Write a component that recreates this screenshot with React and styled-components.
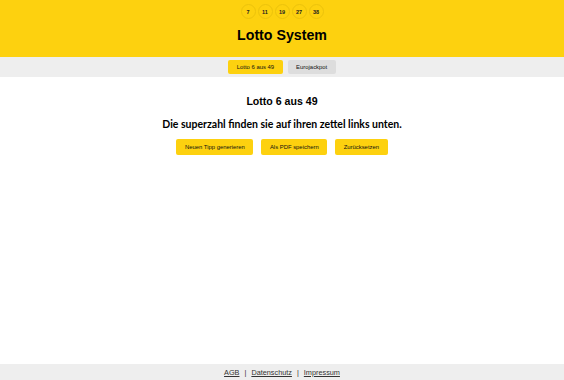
import React from "react";
import styled, { createGlobalStyle } from "styled-components";

const Global = createGlobalStyle`
  html, body { margin: 0; padding: 0; }
  body { font-family: "Liberation Sans", Arial, sans-serif; background: #fff; color: #000; }
`;

const Page = styled.div`
  min-height: 100vh;
  display: flex;
  flex-direction: column;
`;

const Header = styled.header`
  background: #fdd10f;
  height: 57px;
  display: flex;
  flex-direction: column;
  align-items: center;
  padding-top: 4px;
  box-sizing: border-box;
`;

const Balls = styled.div`
  display: flex;
  gap: 2px;
`;

const Ball = styled.div`
  width: 13px;
  height: 13px;
  border-radius: 50%;
  border: 0.5px solid #ecc30c;
  display: flex;
  align-items: center;
  justify-content: center;
  font-size: 5.5px;
  font-weight: bold;
  color: #222;
`;

const Title = styled.h1`
  margin: 9px 0 0;
  font-size: 14.2px;
  font-weight: bold;
  line-height: 1;
`;

const Nav = styled.nav`
  background: #eeeeee;
  height: 20px;
  display: flex;
  justify-content: center;
  align-items: center;
  gap: 5px;
`;

const Tab = styled.button`
  border: none;
  border-radius: 2px;
  height: 14px;
  padding: 0 8.5px;
  font-family: inherit;
  font-size: 5.9px;
  color: #111;
  background: ${(p) => (p.$active ? "#fdd10f" : "#dddddd")};
  cursor: pointer;
`;

const Main = styled.main`
  flex: 1;
  display: flex;
  flex-direction: column;
  align-items: center;
  padding-top: 18px;
`;

const Heading = styled.h2`
  margin: 0;
  font-size: 10.6px;
  font-weight: bold;
  line-height: 13px;
`;

const Sub = styled.h3`
  margin: 10px 0 0;
  font-family: Lato, "Open Sans", sans-serif;
  font-size: 10.5px;
  font-weight: bold;
  line-height: 13px;
`;

const Actions = styled.div`
  display: flex;
  gap: 8px;
  margin-top: 8px;
`;

const ActionButton = styled.button`
  border: none;
  border-radius: 2px;
  height: 16px;
  padding: 0 8.5px;
  font-family: inherit;
  font-size: 5.9px;
  color: #111;
  background: #fdd10f;
  cursor: pointer;
`;

const Footer = styled.footer`
  background: #eeeeee;
  height: 16px;
  display: flex;
  justify-content: center;
  align-items: center;
  font-size: 7.3px;
  color: #333;
  gap: 5px;
`;

const FootLink = styled.a`
  color: #333;
  text-decoration: underline;
  &:visited { color: #333; }
`;

export default function App() {
  const numbers = [7, 11, 19, 27, 38];
  return (
    <Page>
      <Global />
      <Header>
        <Balls>
          {numbers.map((n) => (
            <Ball key={n}>{n}</Ball>
          ))}
        </Balls>
        <Title>Lotto System</Title>
      </Header>
      <Nav>
        <Tab $active>Lotto 6 aus 49</Tab>
        <Tab>Eurojackpot</Tab>
      </Nav>
      <Main>
        <Heading>Lotto 6 aus 49</Heading>
        <Sub>Die superzahl finden sie auf ihren zettel links unten.</Sub>
        <Actions>
          <ActionButton>Neuen Tipp generieren</ActionButton>
          <ActionButton>Als PDF speichern</ActionButton>
          <ActionButton>Zurücksetzen</ActionButton>
        </Actions>
      </Main>
      <Footer>
        <FootLink href="#">AGB</FootLink>
        <span>|</span>
        <FootLink href="#">Datenschutz</FootLink>
        <span>|</span>
        <FootLink href="#">Impressum</FootLink>
      </Footer>
    </Page>
  );
}
